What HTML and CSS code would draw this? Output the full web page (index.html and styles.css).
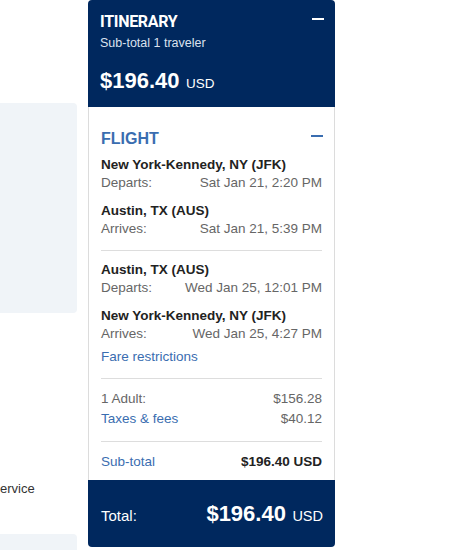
FILE: index.html
```html
<!DOCTYPE html>
<html>
<head>
<meta charset="utf-8">
<link rel="stylesheet" href="styles.css">
</head>
<body>
<div class="page">
  <div class="left">
    <div class="panel"></div>
    <div class="service">ervice</div>
    <div class="panel panel-bottom"></div>
  </div>
  <div class="card">
    <div class="card-head">
      <div class="title-row">
        <span class="title">ITINERARY</span>
        <span class="minus minus-white"></span>
      </div>
      <div class="sub">Sub-total 1 traveler</div>
      <div class="price"><span class="amount">$196.40</span> <span class="cur">USD</span></div>
    </div>
    <div class="card-body">
      <div class="flight-row">
        <span class="flight-title">FLIGHT</span>
        <span class="minus minus-blue"></span>
      </div>
      <div class="segment">
        <div class="stop">
          <div class="city">New York-Kennedy, NY (JFK)</div>
          <div class="line"><span class="label">Departs:</span><span class="time">Sat Jan 21, 2:20 PM</span></div>
        </div>
        <div class="stop">
          <div class="city">Austin, TX (AUS)</div>
          <div class="line"><span class="label">Arrives:</span><span class="time">Sat Jan 21, 5:39 PM</span></div>
        </div>
      </div>
      <div class="divider"></div>
      <div class="segment">
        <div class="stop">
          <div class="city">Austin, TX (AUS)</div>
          <div class="line"><span class="label">Departs:</span><span class="time">Wed Jan 25, 12:01 PM</span></div>
        </div>
        <div class="stop">
          <div class="city">New York-Kennedy, NY (JFK)</div>
          <div class="line"><span class="label">Arrives:</span><span class="time">Wed Jan 25, 4:27 PM</span></div>
        </div>
        <div class="link fare">Fare restrictions</div>
      </div>
      <div class="divider"></div>
      <div class="costs">
        <div class="cost"><span class="label">1 Adult:</span><span class="time">$156.28</span></div>
        <div class="cost"><span class="link">Taxes &amp; fees</span><span class="time">$40.12</span></div>
      </div>
      <div class="divider"></div>
      <div class="cost subtotal"><span class="link">Sub-total</span><span class="sub-amt">$196.40 USD</span></div>
    </div>
    <div class="card-total">
      <span class="total-label">Total:</span>
      <span class="total-price"><span class="amount">$196.40</span> <span class="cur">USD</span></span>
    </div>
  </div>
</div>
</body>
</html>
```
FILE: styles.css
```css
html, body {
  margin: 0;
  padding: 0;
  background: #ffffff;
  overflow: hidden;
}
body {
  font-family: "Liberation Sans", Arial, sans-serif;
  color: #222;
}
.page {
  display: flex;
  gap: 11px;
  align-items: flex-start;
}
.left {
  width: 77px;
  display: flex;
  flex-direction: column;
}
.panel {
  margin-top: 103px;
  height: 210px;
  background: #f0f4f8;
  border-radius: 0 4px 4px 0;
}
.service {
  margin-top: 167px;
  font-size: 13px;
  line-height: 18px;
  color: #333;
}
.panel-bottom {
  margin-top: 36px;
  height: 40px;
  border-radius: 0 4px 0 0;
}
.card {
  width: 247px;
  display: flex;
  flex-direction: column;
}
.card-head {
  background: #00285e;
  color: #fff;
  border-radius: 4px 4px 0 0;
  padding: 12px 12px 14px 12px;
  height: 81px;
}
.title-row, .flight-row {
  display: flex;
  justify-content: space-between;
  align-items: center;
}
.title {
  font-family: Roboto, "Liberation Sans", sans-serif;
  font-weight: bold;
  font-size: 16px;
  line-height: 20px;
  letter-spacing: -0.3px;
}
.minus {
  display: block;
  width: 12px;
  height: 2px;
  margin-right: -1px;
}
.minus-white { background: #fff; margin-top: -6px; }
.minus-blue { background: #3a6db0; margin-top: -6px; }
.sub {
  font-size: 12.5px;
  line-height: 18px;
  padding-top: 2px;
  color: #dbe2ee;
}
.price {
  margin-top: 16px;
  line-height: 26px;
}
.amount {
  font-weight: bold;
  font-size: 22px;
}
.cur {
  font-size: 13.5px;
  margin-left: 2px;
}
.card-body {
  border-left: 1px solid #dcdcdc;
  border-right: 1px solid #dcdcdc;
  padding: 22px 12px 8px 12px;
  font-size: 13.5px;
}
.flight-title {
  color: #3a6db0;
  font-weight: bold;
  font-size: 16px;
  line-height: 20px;
}
.flight-row { margin-bottom: 7px; }
.segment {
  display: flex;
  flex-direction: column;
  gap: 10px;
}
.stop { line-height: 18px; }
.city {
  font-weight: bold;
  color: #222;
}
.line, .cost {
  display: flex;
  justify-content: space-between;
}
.label { color: #666; }
.time { color: #666; }
.link { color: #3a6db0; }
.fare { line-height: 18px; margin-top: -5px; }
.divider {
  height: 1px;
  background: #dddddd;
  margin: 12px 0 10px 0;
}
.costs { line-height: 20px; }
.cost { line-height: 20px; }
.subtotal { margin-top: 1px; }
.sub-amt { font-weight: bold; color: #222; }
.card-total {
  background: #00285e;
  color: #fff;
  border-radius: 0 0 4px 4px;
  height: 67px;
  padding: 0 12px 0 13px;
  display: flex;
  justify-content: space-between;
  align-items: center;
}
.total-label {
  font-size: 15px;
  margin-top: 3px;
}
.total-price .amount { font-size: 22px; }
.total-price .cur { font-size: 14.5px; }
```
